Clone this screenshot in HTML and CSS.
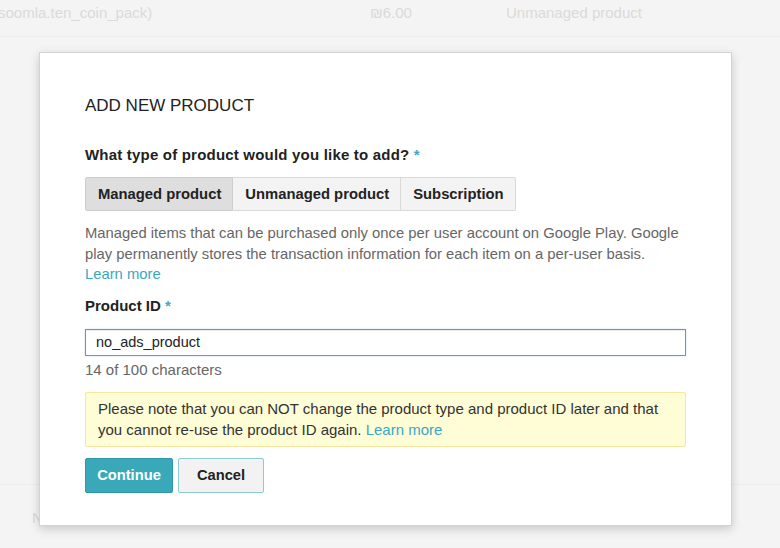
FILE: index.html
```html
<!DOCTYPE html>
<html>
<head>
<meta charset="utf-8">
<link rel="stylesheet" href="styles.css">
</head>
<body>
<div class="page">
  <div class="row row-top">
    <span class="cell cell-id">soomla.ten_coin_pack)</span>
    <span class="cell cell-price">₪6.00</span>
    <span class="cell cell-type">Unmanaged product</span>
  </div>
  <div class="spacer"></div>
  <div class="row row-bottom">
    <span class="cell cell-section">New product</span>
  </div>
  <div class="row row-last">
    <span class="cell cell-section">Unlimited</span>
  </div>
</div>

<div class="modal">
  <h1 class="title">ADD NEW PRODUCT</h1>
  <div class="label label-type">What type of product would you like to add? <span class="req">*</span></div>
  <div class="segmented">
    <button class="seg active">Managed product</button>
    <button class="seg">Unmanaged product</button>
    <button class="seg">Subscription</button>
  </div>
  <p class="desc">Managed items that can be purchased only once per user account on Google Play. Google play permanently stores the transaction information for each item on a per-user basis. <a class="link" href="#">Learn more</a></p>
  <div class="label label-id">Product ID <span class="req">*</span></div>
  <div class="input">no_ads_product</div>
  <div class="hint">14 of 100 characters</div>
  <div class="note">Please note that you can NOT change the product type and product ID later and that you cannot re-use the product ID again. <a class="link" href="#">Learn more</a></div>
  <div class="actions">
    <button class="btn btn-primary">Continue</button>
    <button class="btn btn-cancel">Cancel</button>
  </div>
</div>
</body>
</html>
```
FILE: styles.css
```css
html, body {
  margin: 0;
  padding: 0;
}
body {
  background: #f4f4f4;
  font-family: "Liberation Sans", Arial, sans-serif;
  width: 780px;
  height: 548px;
  overflow: hidden;
  position: relative;
}
.page {
  display: flex;
  flex-direction: column;
}
.row {
  display: flex;
  align-items: center;
  color: #dadada;
  font-size: 15px;
}
.row-top {
  height: 25px;
  padding-bottom: 11px;
  border-bottom: 1px solid #ececec;
}
.cell-id {
  width: 372px;
  margin-left: -2px;
}
.cell-price {
  width: 136px;
}
.spacer {
  height: 447px;
  border-bottom: 1px solid #ececec;
}
.row-bottom {
  height: 60px;
  padding-left: 32px;
  margin-top: 2px;
}
.row-last {
  padding-left: 32px;
  margin-top: -2px;
}
.modal {
  position: absolute;
  left: 39px;
  top: 52px;
  width: 601px;
  height: 432px;
  padding: 40px 45px 0 45px;
  background: #fff;
  border: 1px solid #d3d3d3;
  box-shadow: 0 3px 9px rgba(0, 0, 0, 0.18);
}
.title {
  margin: 0 0 27px;
  font-size: 17px;
  font-weight: normal;
  color: #222;
  line-height: 26px;
}
.label {
  font-size: 15px;
  font-weight: bold;
  color: #222;
  line-height: 18px;
  margin-bottom: 13px;
}
.label-type {
  letter-spacing: 0.2px;
}
.req {
  color: #45a8c2;
}
.segmented {
  display: flex;
}
.seg {
  font-family: inherit;
  font-size: 14.8px;
  font-weight: bold;
  color: #222;
  background: #f3f3f3;
  border: 1px solid #d9d9d9;
  border-left: none;
  height: 34px;
  padding: 0 11px 0 12px;
  margin: 0;
}
.seg:first-child {
  border-left: 1px solid #d1d1d1;
  border-radius: 2px 0 0 2px;
}
.seg:last-child {
  border-radius: 0 2px 2px 0;
}
.seg.active {
  background: #dedede;
  border-color: #cdcdcd;
}
.desc {
  margin: 12px 0 12px;
  font-size: 14.8px;
  line-height: 20.5px;
  color: #666;
}
.link {
  color: #3aa7c3;
  text-decoration: none;
}
.label-id {
  margin-bottom: 14px;
}
.input {
  height: 25px;
  border: 1px solid #5b9ad8;
  box-shadow: inset 0 1px 1px rgba(0,0,0,0.08), 0 0 2px rgba(91,154,216,0.35);
  font-size: 14.5px;
  line-height: 25px;
  padding: 0 10px;
  color: #222;
}
.hint {
  font-size: 15px;
  color: #666;
  margin-top: 5px;
  line-height: 18px;
}
.note {
  margin-top: 13px;
  background: #fffdd6;
  border: 1px solid #f7e6a0;
  border-radius: 2px;
  padding: 5px 12px 6px;
  font-size: 15px;
  line-height: 21px;
  color: #333;
}
.actions {
  display: flex;
  gap: 5px;
  margin-top: 11px;
}
.btn {
  font-family: inherit;
  font-size: 14.7px;
  font-weight: bold;
  height: 35px;
  margin: 0;
  border-radius: 2px;
}
.btn-primary {
  width: 88px;
  background: #39a9b9;
  color: #fff;
  border: 1px solid #2e98a8;
}
.btn-cancel {
  width: 86px;
  background: #f2f2f2;
  color: #222;
  border: 1px solid #8ccad6;
}
```
